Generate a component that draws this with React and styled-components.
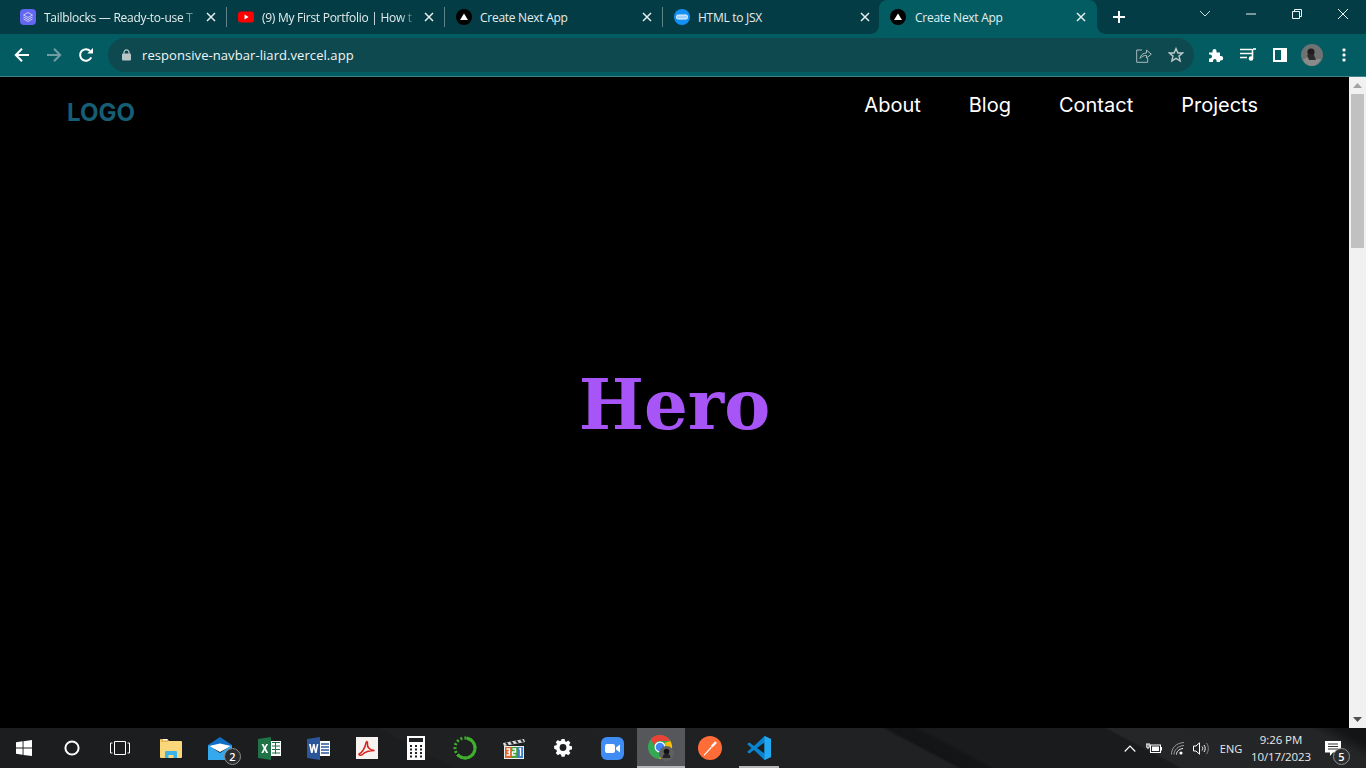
import React from "react";
import styled, { createGlobalStyle } from "styled-components";

const GlobalStyle = createGlobalStyle`
  html, body { margin: 0; padding: 0; background: #000; overflow: hidden; }
  * { box-sizing: border-box; }
`;

const Shell = styled.div`
  width: 1366px;
  height: 768px;
  display: flex;
  flex-direction: column;
  overflow: hidden;
  font-family: "Open Sans", "Liberation Sans", sans-serif;
`;

/* ---- chrome tabs ---- */
const TabStrip = styled.div`
  height: 34px;
  flex: none;
  display: flex;
  align-items: stretch;
  padding-left: 9px;
  background: #033c44;
`;

const Tab = styled.div`
  position: relative;
  width: 218px;
  margin-left: ${(p) => (p.$active ? "-2px" : "0")};
  padding: 0 9px 0 11px;
  display: flex;
  align-items: center;
  color: #e6eeef;
  background: ${(p) => (p.$active ? "#045c63" : "transparent")};
  border-radius: 8px 8px 0 0;
  &::after {
    content: "";
    display: ${(p) => (p.$sep ? "block" : "none")};
    position: absolute;
    right: 0;
    top: 7px;
    width: 1px;
    height: 20px;
    background: #5d8287;
  }
`;

const Flare = styled.span`
  position: absolute;
  bottom: 0;
  ${(p) => (p.$side === "left" ? "left: -8px;" : "right: -8px;")}
  width: 8px;
  height: 8px;
  background: radial-gradient(
    circle at ${(p) => (p.$side === "left" ? "0 0" : "100% 0")},
    transparent 7.5px,
    #045c63 8px
  );
`;

const TabIcon = styled.span`
  width: 16px;
  height: 16px;
  flex: none;
  display: flex;
  margin-right: ${(p) => (p.$active ? 9 : 8)}px;
`;

const TabTitle = styled.span`
  flex: 1;
  font-size: 12px;
  letter-spacing: -0.27px;
  white-space: nowrap;
  overflow: hidden;
  -webkit-mask-image: ${(p) => (p.$fade ? "linear-gradient(90deg,#000 88%,transparent 100%)" : "none")};
  mask-image: ${(p) => (p.$fade ? "linear-gradient(90deg,#000 88%,transparent 100%)" : "none")};
`;

const TabClose = styled.svg`
  width: 10px;
  height: 10px;
  flex: none;
  margin-right: 2px;
  margin-left: 6px;
`;

const NewTab = styled.svg`
  width: 14px;
  height: 14px;
  flex: none;
  margin: 10px 0 0 15px;
`;

const WindowControls = styled.div`
  margin-left: auto;
  display: flex;
  align-items: flex-start;
`;

const WindowButton = styled.div`
  width: 46px;
  height: 28px;
  display: flex;
  align-items: center;
  justify-content: center;
`;

/* ---- chrome toolbar ---- */
const Toolbar = styled.div`
  height: 43px;
  flex: none;
  display: flex;
  align-items: center;
  background: #045c63;
  border-bottom: 1px solid #3f8388;
`;

const NavIcons = styled.div`
  width: 108px;
  flex: none;
  display: flex;
  padding-left: 6px;
`;

const ToolButton = styled.div`
  width: 32px;
  height: 32px;
  flex: none;
  display: flex;
  align-items: center;
  justify-content: center;
`;

const Omnibox = styled.div`
  width: 1086px;
  height: 34px;
  flex: none;
  display: flex;
  align-items: center;
  padding: 0 2px 0 14px;
  border-radius: 17px;
  background: #0e4950;
`;

const Url = styled.span`
  flex: 1;
  margin-left: 11px;
  font-size: 13px;
  letter-spacing: 0.07px;
  color: #f1f5f5;
`;

const ExtIcons = styled.div`
  flex: 1;
  display: flex;
  padding-left: 6px;
`;

/* ---- the page ---- */
const Viewport = styled.div`
  flex: 1;
  min-height: 0;
  display: flex;
`;

const Page = styled.main`
  position: relative;
  flex: 1;
  display: flex;
  align-items: center;
  justify-content: center;
  background: #000;
`;

const Header = styled.header`
  position: absolute;
  top: 0;
  left: 67px;
  right: 91px;
  display: flex;
  justify-content: space-between;
  align-items: flex-start;
`;

const Logo = styled.div`
  margin-top: 21px;
  font-family: Inter, "Liberation Sans", sans-serif;
  font-size: 24px;
  line-height: 30px;
  font-weight: 700;
  color: #155e75;
`;

const Menu = styled.nav`
  display: flex;
  gap: 48px;
  margin-top: 14px;
`;

const MenuLink = styled.a`
  font-family: Inter, "Liberation Sans", sans-serif;
  font-size: 20px;
  line-height: 28px;
  color: #fff;
`;

const Hero = styled.h1`
  margin: 3px 0 0;
  font-family: "DejaVu Serif", "Liberation Serif", serif;
  font-size: 69px;
  line-height: 1;
  font-weight: 700;
  color: #a855f7;
`;

const Scrollbar = styled.div`
  width: 17px;
  flex: none;
  display: flex;
  flex-direction: column;
  background: #f1f1f1;
`;

const ScrollArrow = styled.div`
  height: 17px;
  flex: none;
  display: flex;
  align-items: center;
  justify-content: center;
`;

const ScrollThumb = styled.div`
  height: 154px;
  margin-left: 2px;
  margin-right: 2px;
  background: #c1c1c1;
`;

const ScrollTrack = styled.div`
  flex: 1;
`;

/* ---- windows taskbar ---- */
const Taskbar = styled.footer`
  height: 40px;
  flex: none;
  display: flex;
  align-items: stretch;
  color: #fff;
  background: linear-gradient(
    28deg,
    #1b1d1f 0%,
    #1b1d1f 31.4%,
    #1f2021 31.6%,
    #202122 66.3%,
    #131415 66.8%,
    #141516 68.6%,
    #1a1b1c 69.2%,
    #1a1b1c 81.8%,
    #252627 82.1%,
    #242527 96%,
    #131415 98%
  );
`;

const SystemIcon = styled.div`
  width: 48px;
  flex: none;
  display: flex;
  align-items: center;
  justify-content: center;
`;

const PinnedIcons = styled.div`
  display: flex;
  margin-left: 3px;
`;

const Pinned = styled.div`
  position: relative;
  width: 48px;
  margin-right: 1px;
  display: flex;
  align-items: center;
  justify-content: center;
  background: ${(p) => (p.$active ? "#55575a" : "transparent")};
  &::after {
    content: "";
    display: ${(p) => (p.$running ? "block" : "none")};
    position: absolute;
    left: ${(p) => (p.$active ? 0 : 4)}px;
    right: ${(p) => (p.$active ? 0 : 4)}px;
    bottom: 0;
    height: 2px;
    background: #b5b6b8;
  }
`;

const Badge = styled.span`
  position: absolute;
  right: ${(p) => p.$right}px;
  bottom: 3px;
  width: 17px;
  height: 17px;
  border-radius: 50%;
  border: 1px solid #8b8d8f;
  background: #2b2d2f;
  font-size: 11px;
  line-height: 15px;
  font-weight: 600;
  text-align: center;
  color: #fff;
`;

const Tray = styled.div`
  margin-left: auto;
  display: flex;
  align-items: center;
  padding-right: 16px;
`;

const TrayIcon = styled.div`
  width: ${(p) => p.$w}px;
  flex: none;
  display: flex;
  justify-content: center;
`;

const TrayText = styled.span`
  width: 30px;
  margin-left: 4px;
  flex: none;
  text-align: center;
  font-size: 11px;
  color: #e8e8e8;
`;

const Clock = styled.div`
  width: 70px;
  flex: none;
  text-align: center;
  font-size: 11.5px;
  line-height: 17px;
  color: #e8e8e8;
  letter-spacing: -0.1px;
`;

const Notify = styled.div`
  position: relative;
  width: 34px;
  height: 40px;
  flex: none;
  display: flex;
  align-items: center;
  justify-content: center;
`;

/* ---- icons ---- */
const NextFav = () => (
  <svg width="16" height="16" viewBox="0 0 16 16">
    <circle cx="8" cy="8" r="8" fill="#000" />
    <path d="M8 4.6 12 11H4z" fill="#fff" />
  </svg>
);

const TailblocksFav = () => (
  <svg width="16" height="16" viewBox="0 0 16 16">
    <rect width="16" height="16" rx="4" fill="#6366f1" />
    <path d="M8 3.5 12.5 6 8 8.5 3.5 6z" fill="none" stroke="#c9ccfb" />
    <path d="M3.5 8 8 10.5 12.5 8M3.5 10 8 12.5 12.5 10" fill="none" stroke="#c9ccfb" />
  </svg>
);

const YoutubeFav = () => (
  <svg width="16" height="16" viewBox="0 0 16 16">
    <rect y="2.5" width="16" height="11" rx="3" fill="#f00" />
    <path d="M6.5 5.6 10.6 8l-4.1 2.4z" fill="#fff" />
  </svg>
);

const JsxFav = () => (
  <svg width="16" height="16" viewBox="0 0 16 16">
    <circle cx="8" cy="8" r="8" fill="#1390f5" />
    <rect x="2.5" y="6" width="11" height="4" rx="1.5" fill="#9fd0fb" stroke="#e8f4ff" />
  </svg>
);

const Close = () => (
  <TabClose viewBox="0 0 10 10">
    <path d="M1 1l8 8M9 1 1 9" stroke="#e6eeef" strokeWidth="1.5" />
  </TabClose>
);

const Back = () => (
  <svg width="16" height="16" viewBox="0 0 16 16">
    <path d="M15 8H2M8 1.8 1.8 8 8 14.2" fill="none" stroke="#fff" strokeWidth="2" />
  </svg>
);

const Forward = () => (
  <svg width="16" height="16" viewBox="0 0 16 16">
    <path d="M1 8h13M8 1.8 14.2 8 8 14.2" fill="none" stroke="#6f9fa3" strokeWidth="2" />
  </svg>
);

const Reload = () => (
  <svg width="16" height="16" viewBox="0 0 16 16">
    <path d="M13.2 10.4A5.8 5.8 0 1 1 12.2 4" fill="none" stroke="#fff" strokeWidth="2" />
    <path d="M9.3 6.6H15V1z" fill="#fff" />
  </svg>
);

const LockIcon = () => (
  <svg width="9" height="12" viewBox="0 0 9 12">
    <path d="M2 5V3.4a2.5 2.5 0 0 1 5 0V5" fill="none" stroke="#b9c6c8" strokeWidth="1.2" />
    <rect y="4.5" width="9" height="7" rx="1" fill="#b9c6c8" />
  </svg>
);

const Share = () => (
  <svg width="16" height="15" viewBox="0 0 16 15">
    <path d="M6 2H.7v12.3h11V10" fill="none" stroke="#a9babc" />
    <path d="M4 10.500C4.500 7 7 5 10.500 5V2L15.300 6.200 10.500 10V7.400C8 7.400 5.500 8.400 4 10.500z" fill="none" stroke="#a9babc" />
  </svg>
);

const Star = () => (
  <svg width="16" height="16" viewBox="0 0 16 16">
    <path d="M8 1.600 9.900 6h4.800l-3.700 3.100 1.200 4.800L8 11.300l-4.200 2.600L5 9.100 1.300 6h4.800z" fill="none" stroke="#bccacb" strokeWidth="1.400" />
  </svg>
);

const PuzzleIcon = () => (
  <svg width="16" height="16" viewBox="0 0 16 16">
    <path d="M1 5.500h3.500V4a2 2 0 1 1 4 0v1.500H12V9h1a2.200 2.200 0 1 1 0 4.400h-1V15H8.600v-1.200a1.800 1.800 0 1 0-3.600 0V15H1v-3.600h1a2 2 0 1 0 0-4H1z" fill="#fff" />
  </svg>
);

const MediaIcon = () => (
  <svg width="16" height="14" viewBox="0 0 16 14">
    <path d="M0 1.500h12M0 5.500h12M0 9.500h7" stroke="#fff" strokeWidth="1.400" />
    <path d="M12.500 1v9" stroke="#fff" strokeWidth="1.600" />
    <path d="M13 1h3" stroke="#fff" strokeWidth="1.600" />
    <circle cx="11" cy="10.500" r="2.300" fill="#fff" />
  </svg>
);

const PanelIcon = () => (
  <svg width="14" height="14" viewBox="0 0 14 14">
    <path d="M0 0h14v14H0zM2 2v10h6V2z" fill="#fff" fillRule="evenodd" />
  </svg>
);

const AvatarIcon = () => (
  <svg width="22" height="22" viewBox="0 0 22 22">
    <circle cx="11" cy="11" r="11" fill="#6f7273" />
    <path d="M2 16c3-3 6-3 9-2s6 1 9 1c-2 4-5 7-9 7s-7-2-9-6z" fill="#8a8c8c" />
    <circle cx="10" cy="8" r="3.600" fill="#1e1e1e" />
    <path d="M6 11c2-1 5-1 7 0l2 5H8z" fill="#2a2a2a" />
  </svg>
);

const Dots = () => (
  <svg width="4" height="14" viewBox="0 0 4 14">
    <rect x=".5" y=".5" width="3" height="3" rx="1" fill="#fff" />
    <rect x=".5" y="5.500" width="3" height="3" rx="1" fill="#fff" />
    <rect x=".5" y="10.500" width="3" height="3" rx="1" fill="#fff" />
  </svg>
);

const WinChevron = () => (
  <svg width="12" height="8" viewBox="0 0 12 8">
    <path d="M1 1l5 5 5-5" fill="none" stroke="#cfdcdd" />
  </svg>
);

const WinMin = () => (
  <svg width="10" height="2" viewBox="0 0 10 2">
    <path d="M0 1h10" stroke="#eef3f3" />
  </svg>
);

const WinRestore = () => (
  <svg width="10" height="10" viewBox="0 0 10 10">
    <path d="M.5 2.500h7v7h-7zM2.500 2.500v-2h7v7h-2" fill="none" stroke="#eef3f3" />
  </svg>
);

const WinClose = () => (
  <svg width="10" height="10" viewBox="0 0 10 10">
    <path d="M0 0l10 10M10 0 0 10" stroke="#eef3f3" />
  </svg>
);

const WindowsLogo = () => (
  <svg width="16" height="16" viewBox="0 0 16 16">
    <path d="M0 2.300 6.600 1.300V7.600H0zM7.500 1.200 16 0V7.600H7.500zM0 8.500H6.600V14.800L0 13.800zM7.500 8.500H16V16L7.500 14.900z" fill="#fff" />
  </svg>
);

const Cortana = () => (
  <svg width="16" height="16" viewBox="0 0 16 16">
    <circle cx="8" cy="8" r="6.600" fill="none" stroke="#fff" strokeWidth="2" />
  </svg>
);

const TaskView = () => (
  <svg width="20" height="14" viewBox="0 0 20 14">
    <path d="M4.500.5h11v13h-11zM2.500 2H.5v10h2M17.500 2h2v10h-2" fill="none" stroke="#fff" />
  </svg>
);

const Explorer = () => (
  <svg width="22" height="20" viewBox="0 0 22 20">
    <path d="M0 2a1 1 0 0 1 1-1h6l2 2h12a1 1 0 0 1 1 1v15a1 1 0 0 1-1 1H1a1 1 0 0 1-1-1z" fill="#fbd77c" />
    <path d="M1 1h7v3H1z" fill="#eab543" />
    <path d="M3 1h4v1.400H3z" fill="#fff" />
    <path d="M5 20v-6a1 1 0 0 1 1-1h10a1 1 0 0 1 1 1v6h-3.500v-3h-5v3z" fill="#3db4e8" />
  </svg>
);

const Mail = () => (
  <svg width="24" height="23" viewBox="0 0 24 23">
    <path d="M0 8 12 0l12 8v4H0z" fill="#0f70c6" />
    <path d="M1 9 12 6.500 23 9 12 15z" fill="#fff" />
    <path d="M0 8l12 8 12-8v15H0z" fill="#35a9ee" />
  </svg>
);

const Excel = () => (
  <svg width="23" height="23" viewBox="0 0 23 23">
    <path d="M13 4h10v15H13z" fill="#fff" />
    <path d="M14 5.500h8M14 9h8M14 12.500h8M14 16h8M17.500 5v12" stroke="#1f7346" />
    <path d="M0 2 13 0v23L0 21z" fill="#1f7346" />
    <path d="M3.500 7h2l1.300 2.700L8.200 7h1.900l-2.300 4.300L10.200 16H8.100l-1.400-3-1.400 3H3.300l2.400-4.600z" fill="#fff" />
  </svg>
);

const Word = () => (
  <svg width="23" height="23" viewBox="0 0 23 23">
    <path d="M13 4h10v15H13z" fill="#fff" />
    <path d="M14 7h8M14 10h8M14 13h8M14 16h8" stroke="#2b579a" strokeWidth="1.400" />
    <path d="M0 2 13 0v23L0 21z" fill="#2b579a" />
    <path d="M2 7h1.800l1 5.500L6 7h1.600l1.200 5.500 1-5.500h1.600L9.600 16H8l-1.200-5.300L5.600 16H4z" fill="#fff" />
  </svg>
);

const Acrobat = () => (
  <svg width="22" height="22" viewBox="0 0 22 22">
    <rect width="22" height="22" fill="#f7f3f1" />
    <path d="M3 17c3-1 6-6 7-11 .3-2 2-2 1.500 1-.5 3 2 6 7 6.500-4 0-9 1-12 4-1 1-4 1-3.500-.5z" fill="none" stroke="#d8211c" strokeWidth="1.500" />
  </svg>
);

const Calculator = () => (
  <svg width="18" height="24" viewBox="0 0 18 24">
    <path d="M0 0h18v24H0zM2 2v4h14V2z" fill="#fff" fillRule="evenodd" />
    {[9, 12.5, 16, 19.5].map((y) =>
      [3, 8, 13].map((x) => <rect key={`${x}-${y}`} x={x} y={y} width="2" height="2" fill="#222" />)
    )}
  </svg>
);

const GreenRing = () => (
  <svg width="24" height="24" viewBox="0 0 24 24">
    <circle cx="12" cy="12" r="10" fill="none" stroke="#3fb02c" strokeWidth="3" strokeDasharray="38 25" transform="rotate(-80 12 12)" />
    <circle cx="12" cy="12" r="10" fill="none" stroke="#3fb02c" strokeWidth="3" strokeDasharray="2 2" strokeDashoffset="-24" transform="rotate(-80 12 12)" />
  </svg>
);

const MediaClassic = () => (
  <svg width="22" height="23" viewBox="0 0 22 23">
    <path d="M0 6 21 2l1 3L1 9z" fill="#ddd" />
    <path d="M3 5.500 5 8M8 4.500 10 7M13 3.500 15 6M18 2.500 20 5" stroke="#222" strokeWidth="2" />
    <rect x="1" y="9" width="20" height="13" fill="#eee" />
    <rect x="2" y="10" width="6" height="11" fill="#d9662a" />
    <rect x="8" y="10" width="6" height="11" fill="#49a23e" />
    <rect x="14" y="10" width="6" height="11" fill="#3b7fc9" />
    <path d="M3.500 12h3v3h-2 2v3h-3M9.500 12h3v3h-3v3h3M16 12l1.500-.5V19" fill="none" stroke="#fff" strokeWidth="1.300" />
  </svg>
);

const Gear = () => (
  <svg width="18" height="18" viewBox="0 0 18 18">
    <path d="M7.300 0h3.400l.4 2.400 1.500.7 2-1.400 2.400 2.400-1.400 2 .7 1.500 2.400.4v3.400l-2.400.4-.7 1.500 1.400 2-2.400 2.400-2-1.400-1.500.7-.4 2.400H7.300l-.4-2.400-1.500-.7-2 1.400-2.400-2.400 1.400-2-.7-1.500L-.7 10.700V7.300l2.400-.4.7-1.500-1.400-2 2.400-2.400 2 1.400 1.500-.7z" fill="#fff" transform="translate(.8 0) scale(.92)" />
    <circle cx="9" cy="8.500" r="3.400" fill="#1e2022" />
  </svg>
);

const Zoom = () => (
  <svg width="23" height="23" viewBox="0 0 23 23">
    <rect width="23" height="23" rx="6" fill="#3f8cf3" />
    <rect x="4" y="7" width="10" height="9" rx="2" fill="#fff" />
    <path d="M15 10.500 19 7.500v8l-4-3z" fill="#fff" />
  </svg>
);

const ChromeIcon = () => (
  <svg width="26" height="26" viewBox="0 0 26 26">
    <circle cx="12" cy="12" r="12" fill="#34a853" />
    <path d="M12 0a12 12 0 0 1 10.400 6H12a6 6 0 0 0-5.700 4.200L2.700 4.300A12 12 0 0 1 12 0z" fill="#ea4335" />
    <path d="M22.400 6A12 12 0 0 1 11 24l5.200-7.700A6 6 0 0 0 16.500 8z" fill="#fbbc05" />
    <circle cx="12" cy="12" r="5.500" fill="#fff" />
    <circle cx="12" cy="12" r="4.300" fill="#4285f4" />
    <circle cx="18.500" cy="18.500" r="7.500" fill="#5f6163" />
    <circle cx="18.500" cy="16.500" r="2.800" fill="#111" />
    <path d="M14.500 23c.5-3.500 2-4.500 4-4.500s3.500 1 4 4.500z" fill="#222" />
  </svg>
);

const Postman = () => (
  <svg width="24" height="24" viewBox="0 0 24 24">
    <circle cx="12" cy="12" r="12" fill="#ff6c37" />
    <path d="M5.500 19 13 10.800l.9.9L6.300 19.700z" fill="#fff" />
    <path d="M12.800 10 16.600 5.800a1.300 1.300 0 0 1 1.800 1.800L14.400 11.600z" fill="#fff" />
  </svg>
);

const VsCode = () => (
  <svg width="24" height="24" viewBox="0 0 24 24">
    <path d="M17.500 0 24 3v18l-6.500 3L7 14l-4.500 3.500L0 16l4.500-4L0 8l2.500-1.500L7 10z" fill="#0a84d0" />
    <path d="M17.500 6.500 10 12l7.500 5.500z" fill="#1c1e20" />
    <path d="M17.500 0 24 3v18l-6.500 3z" fill="#23a9f2" />
  </svg>
);

const Caret = () => (
  <svg width="12" height="7" viewBox="0 0 12 7">
    <path d="M.7 6.500 6 1l5.300 5.500" fill="none" stroke="#fff" strokeWidth="1.200" />
  </svg>
);

const Battery = () => (
  <svg width="16" height="12" viewBox="0 0 16 12">
    <path d="M1 1v2M3 1v2M0 3h4v2H0zM2 5v2" fill="none" stroke="#fff" />
    <rect x="4.500" y="3" width="10" height="7.500" fill="none" stroke="#fff" />
    <rect x="6" y="4.500" width="7" height="4.500" fill="#fff" />
    <rect x="15" y="5" width="1" height="3.500" fill="#fff" />
  </svg>
);

const Wifi = () => (
  <svg width="14" height="13" viewBox="0 0 14 13">
    <path d="M.5 12.500C.5 6 5 1 13 .5M3 12.500C3 8 7 3.800 13 3.500" fill="none" stroke="#9a9a9a" />
    <path d="M5.500 12.500C5.500 9.500 8 7 12 6.500" fill="none" stroke="#fff" />
    <circle cx="10" cy="11" r="1.600" fill="#fff" />
  </svg>
);

const Speaker = () => (
  <svg width="16" height="13" viewBox="0 0 16 13">
    <path d="M.5 4h2.500L6.500.8v11.400L3 9H.5z" fill="none" stroke="#fff" />
    <path d="M9 4.500c1 1.300 1 2.700 0 4M11 3c1.600 2 1.600 5 0 7" fill="none" stroke="#fff" />
    <path d="M13.500 1c2.400 3 2.400 8 0 11" fill="none" stroke="#8a8a8a" />
  </svg>
);

const NotifyIcon = () => (
  <svg width="16" height="15" viewBox="0 0 16 15">
    <path d="M0 0h16v11.500H8L5 15v-3.500H0z" fill="#fff" />
    <path d="M3 3h10M3 5.500h10M3 8h10" stroke="#333" />
  </svg>
);

const tabs = [
  { title: "Tailblocks — Ready-to-use T", Icon: TailblocksFav, fade: true, sep: true },
  { title: "(9) My First Portfolio | How t", Icon: YoutubeFav, fade: true, sep: true },
  { title: "Create Next App", Icon: NextFav, sep: true },
  { title: "HTML to JSX", Icon: JsxFav },
  { title: "Create Next App", Icon: NextFav, active: true },
];

const pinned = [
  { Icon: Explorer },
  { Icon: Mail, badge: "2" },
  { Icon: Excel },
  { Icon: Word },
  { Icon: Acrobat },
  { Icon: Calculator },
  { Icon: GreenRing },
  { Icon: MediaClassic },
  { Icon: Gear },
  { Icon: Zoom },
  { Icon: ChromeIcon, active: true, running: true },
  { Icon: Postman },
  { Icon: VsCode, running: true },
];

const links = ["About", "Blog", "Contact", "Projects"];

export default function App() {
  return (
    <Shell>
      <GlobalStyle />
      <TabStrip>
        {tabs.map((t, i) => (
          <Tab key={i} $active={t.active} $sep={t.sep}>
            {t.active && <Flare $side="left" />}
            {t.active && <Flare $side="right" />}
            <TabIcon $active={t.active}>
              <t.Icon />
            </TabIcon>
            <TabTitle $fade={t.fade}>{t.title}</TabTitle>
            <Close />
          </Tab>
        ))}
        <NewTab viewBox="0 0 14 14">
          <path d="M7 1v12M1 7h12" stroke="#fff" strokeWidth="2" />
        </NewTab>
        <WindowControls>
          <WindowButton><WinChevron /></WindowButton>
          <WindowButton><WinMin /></WindowButton>
          <WindowButton><WinRestore /></WindowButton>
          <WindowButton><WinClose /></WindowButton>
        </WindowControls>
      </TabStrip>

      <Toolbar>
        <NavIcons>
          <ToolButton><Back /></ToolButton>
          <ToolButton><Forward /></ToolButton>
          <ToolButton><Reload /></ToolButton>
        </NavIcons>
        <Omnibox>
          <LockIcon />
          <Url>responsive-navbar-liard.vercel.app</Url>
          <ToolButton><Share /></ToolButton>
          <ToolButton><Star /></ToolButton>
        </Omnibox>
        <ExtIcons>
          <ToolButton><PuzzleIcon /></ToolButton>
          <ToolButton><MediaIcon /></ToolButton>
          <ToolButton><PanelIcon /></ToolButton>
          <ToolButton><AvatarIcon /></ToolButton>
          <ToolButton><Dots /></ToolButton>
        </ExtIcons>
      </Toolbar>

      <Viewport>
        <Page>
          <Header>
            <Logo>LOGO</Logo>
            <Menu>
              {links.map((l) => (
                <MenuLink key={l}>{l}</MenuLink>
              ))}
            </Menu>
          </Header>
          <Hero>Hero</Hero>
        </Page>
        <Scrollbar>
          <ScrollArrow>
            <svg width="9" height="5" viewBox="0 0 9 5"><path d="M4.500 0 9 5H0z" fill="#a3a3a3" /></svg>
          </ScrollArrow>
          <ScrollThumb />
          <ScrollTrack />
          <ScrollArrow>
            <svg width="9" height="5" viewBox="0 0 9 5"><path d="M0 0h9L4.500 5z" fill="#505050" /></svg>
          </ScrollArrow>
        </Scrollbar>
      </Viewport>

      <Taskbar>
        <SystemIcon><WindowsLogo /></SystemIcon>
        <SystemIcon><Cortana /></SystemIcon>
        <SystemIcon><TaskView /></SystemIcon>
        <PinnedIcons>
          {pinned.map((p, i) => (
            <Pinned key={i} $active={p.active} $running={p.running}>
              <p.Icon />
              {p.badge && <Badge $right={3}>{p.badge}</Badge>}
            </Pinned>
          ))}
        </PinnedIcons>
        <Tray>
          <TrayIcon $w={24}><Caret /></TrayIcon>
          <TrayIcon $w={24}><Battery /></TrayIcon>
          <TrayIcon $w={24}><Wifi /></TrayIcon>
          <TrayIcon $w={22}><Speaker /></TrayIcon>
          <TrayText>ENG</TrayText>
          <Clock>
            9:26 PM
            <br />
            10/17/2023
          </Clock>
          <Notify>
            <NotifyIcon />
            <Badge $right={0}>5</Badge>
          </Notify>
        </Tray>
      </Taskbar>
    </Shell>
  );
}
